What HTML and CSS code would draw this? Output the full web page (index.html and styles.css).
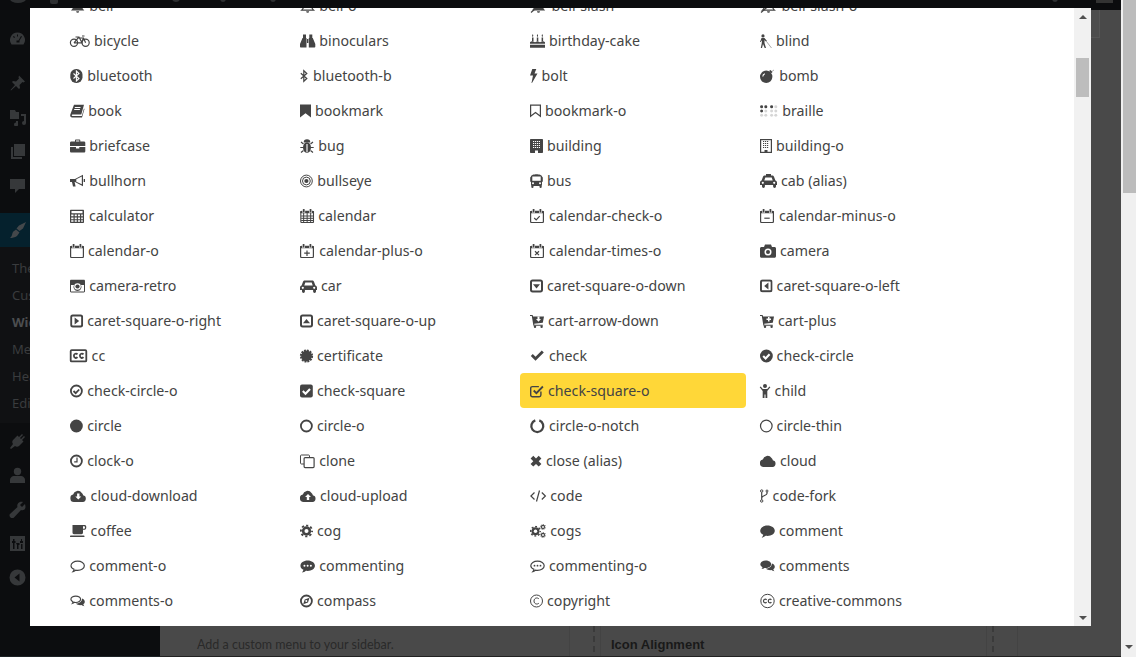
FILE: index.html
```html
<!DOCTYPE html>
<html lang="en">
<head>
<meta charset="utf-8">
<title>Icon picker</title>
<link rel="stylesheet" href="styles.css">
</head>
<body>
<svg class="defs" width="0" height="0" aria-hidden="true">
  <defs>
    <symbol id="bell" viewBox="0 0 15 14" overflow="visible"><path d="M.8 11.5c1.9-1.8 2.7-3.8 2.7-6.3a4 4 0 0 1 8 0c0 2.5.8 4.5 2.7 6.3zM6 12.3a1.500 1.500 0 0 0 3 0z"/></symbol>
    <symbol id="bello" viewBox="0 0 15 14" overflow="visible"><path class="s" d="M1.500 11.200c1.600-1.600 2.500-3.600 2.500-6a3.500 3.500 0 0 1 7 0c0 2.400.9 4.400 2.500 6z"/><path d="M6 12.300a1.500 1.500 0 0 0 3 0z"/></symbol>
    <symbol id="cal" viewBox="0 0 14 14"><rect class="s" x=".6" y="2.300" width="12.800" height="11.300" rx="1"/><rect y="2" width="14" height="2.300" rx=".8"/><rect class="w" x="2.200" y="0" width="2.800" height="3.800"/><rect class="w" x="9" y="0" width="2.800" height="3.800"/><rect x="2.700" y="0" width="1.800" height="3.500" rx=".5"/><rect x="9.500" y="0" width="1.800" height="3.500" rx=".5"/></symbol>
    <symbol id="sq" viewBox="0 0 13 14"><rect class="s4" x="1" y="1.400" width="11" height="11" rx="1.600"/></symbol>
    <symbol id="car" viewBox="0 0 17 14"><path d="M0 8.500c0-1 .8-1.700 1.600-1.900L3 2.800c.3-.8 1-1.300 1.800-1.300h7.400c.8 0 1.500.5 1.800 1.300l1.400 3.800c.8.200 1.600.9 1.600 1.900V11h-1v1.500a1.400 1.400 0 0 1-2.900 0V11H4.900v1.500a1.400 1.400 0 0 1-2.900 0V11H0z"/><path class="w" d="M4.300 6.500l1-3.100h6.400l1 3.100z"/><circle class="w" cx="2.800" cy="8.800" r="1.100"/><circle class="w" cx="14.200" cy="8.800" r="1.100"/></symbol>
    <symbol id="cart" viewBox="0 0 14 14"><path d="M0 1h2.600l.5 1.500H14l-1.200 6.300-8.600 1 .2 1h8.400v1H3.400L1.800 2H0z"/><circle cx="5" cy="12.800" r="1.200"/><circle cx="11.600" cy="12.800" r="1.200"/></symbol>
    <symbol id="cloud" viewBox="0 0 16 14"><path d="M3.800 13a3.800 3.800 0 0 1-1-7.500A4.800 4.800 0 0 1 11.500 4a3 3 0 0 1 1.300 2.300A3.400 3.400 0 0 1 12.600 13z"/></symbol>
    <symbol id="gear" viewBox="0 0 14 14"><circle cx="7" cy="7" r="5"/><circle class="g" cx="7" cy="7" r="6" stroke-dasharray="2.400 2.310" stroke-dashoffset="1.200"/><circle class="w" cx="7" cy="7" r="2.200"/></symbol>
    <symbol id="bub" viewBox="0 0 15 14"><path d="M7.500 1.500c4 0 7.300 2.300 7.300 5.200s-3.300 5.200-7.300 5.200c-.6 0-1.200 0-1.800-.1-1 .9-2.400 1.600-4 1.700.8-.8 1.400-1.600 1.600-2.700C1.200 9.900.2 8.400.2 6.700c0-2.900 3.300-5.200 7.300-5.200z"/></symbol>
    <symbol id="bubo" viewBox="0 0 15 14"><path class="s" d="M7.500 2.100c3.700 0 6.700 2 6.700 4.600s-3 4.600-6.700 4.600c-.7 0-1.300 0-1.900-.2-.7.800-1.700 1.300-2.700 1.500.6-.7 1-1.500 1-2.400C2 9.400.8 8.200.8 6.700c0-2.600 3-4.600 6.700-4.600z"/></symbol>
  </defs>
</svg>

<div class="page">
  <header class="topbar">
    <i class="tb tb-wp"></i><i class="tb tb-a"></i><i class="tb tb-b"></i><i class="tb tb-c"></i><i class="tb tb-d"></i><i class="tb tb-e"></i><i class="tb tb-f"></i>
  </header>
  <div class="shell">
    <aside class="sidebar">
      <div class="mi mi-dash"><svg width="17" height="17" viewBox="0 0 17 17"><path fill-rule="evenodd" d="M8.500 1.500a7.500 7.500 0 0 0-6 12h12a7.500 7.500 0 0 0-6-12zM8 3.500h1v2H8zM4 5.500l1-.5 1 1.500-1 .5zM13 5.500l-1-.5-2.500 4.500h-2v2h3v-2z"/></svg></div>
      <div class="mi mi-pin"><svg width="17" height="17" viewBox="0 0 17 17"><path d="M10 .5l6 6-1.500 1-1-.5-3 3 .5 3-1 1-3-3-5 4.500-.5-.5 4.500-5-3-3 1-1 3 .5 3-3-.5-1z"/></svg></div>
      <div class="mi"><svg width="18" height="17" viewBox="0 0 18 17"><path d="M1 1h5l1 2h3v7H1zM17 5v9a2 2 0 1 1-2-2V7h-3V5zM9 12v3a2 2 0 1 1-2-1.500V12z"/></svg></div>
      <div class="mi"><svg width="17" height="17" viewBox="0 0 17 17"><path d="M5 1h11v12H5zM2 4h2v10h9v2H2z"/></svg></div>
      <div class="mi"><svg width="17" height="17" viewBox="0 0 17 17"><path d="M1 2h15v10H10l-4 4v-4H1z"/></svg></div>
      <div class="mi-current"><svg width="18" height="18" viewBox="0 0 18 18"><path d="M17 1l-7 3.500-2.500 3 3 2.500 3.500-2.500zM7 8.500l3.500 3L8 15c-2 1.500-5 2-7 2 1.500-1 2-3 2.500-5C4 10 6 9.500 7 8.500z"/></svg></div>
      <nav class="submenu">
        <span>Themes</span><span>Customize</span><span class="on">Widgets</span><span>Menus</span><span>Header</span><span>Editor</span>
      </nav>
      <div class="mi mi-plug"><svg width="17" height="17" viewBox="0 0 17 17"><path d="M13 1l-3 3-1.500-1.500-1 1L4 7c-1 1-1 3 0 4l-3 4 1 1 4-3c1 1 3 1 4 0l3.500-3.500 1-1L13 7l3-3-1-1-3 3-1-1 3-3z"/></svg></div>
      <div class="mi"><svg width="17" height="17" viewBox="0 0 17 17"><circle cx="8.500" cy="4.500" r="3.700"/><path d="M1 16v-3c0-2.500 2.500-4 4-4h7c1.500 0 4 1.500 4 4v3z"/></svg></div>
      <div class="mi"><svg width="17" height="17" viewBox="0 0 17 17"><path d="M16 3l-3 3-2-2 3-3c-2-.5-4 0-5 1.500-.8 1-1 2.500-.5 3.500L1 13c-1 1-.5 2.500.5 3.500s2.500 1 3.500 0l7-7.500c1 .5 2.500.3 3.500-.5C17 7 16.500 5 16 3z"/></svg></div>
      <div class="mi"><svg width="17" height="17" viewBox="0 0 17 17"><path fill-rule="evenodd" d="M1 1h15v15H1zM4 4v2H3v2h1v6h1.500V8h1V6h-1V4zM8 10v4h1.500v-4h1V8h-3.500zM12 4v2h-1v2h3V6h-1V4zM12 9v5h1.500V9z"/></svg></div>
      <div class="mi"><svg width="17" height="17" viewBox="0 0 17 17"><path fill-rule="evenodd" d="M8.500 .5a8 8 0 1 0 0 16 8 8 0 0 0 0-16zM10.500 4.500v8l-5-4z"/></svg></div>
    </aside>
    <main class="content">
      <div class="corner"></div>
      <div class="widgets">
        <p class="w-desc">Add a custom menu to your sidebar.</p>
        <div class="w-area">
          <div class="w-edge"></div>
          <h3 class="w-title">Icon Alignment</h3>
          <div class="w-edge w-edge-r"></div>
        </div>
      </div>
    </main>
    <div class="page-scroll"><div class="page-thumb"></div><div class="page-arrow"></div></div>
  </div>
</div>

<section class="modal">
  <div class="list-wrap">
    <ul class="icons">
      <li><svg class="i" width="15.300" height="14"><use href="#bell"/></svg>bell</li>
      <li><svg class="i" width="15.300" height="14"><use href="#bello"/></svg>bell-o</li>
      <li><svg class="i" width="17.600" height="14" viewBox="0 0 17.600 14"><svg width="15" height="14" x="1"><use href="#bell"/></svg><path class="s" d="M1 13.500 16 .5"/></svg>bell-slash</li>
      <li><svg class="i" width="17.600" height="14" viewBox="0 0 17.600 14"><svg width="15" height="14" x="1"><use href="#bello"/></svg><path class="s" d="M1 13.500 16 .5"/></svg>bell-slash-o</li>

      <li><svg class="i" width="20" height="14" viewBox="0 0 20 14"><circle class="s" cx="4" cy="8.800" r="3.600"/><circle class="s" cx="15.600" cy="8.800" r="3.600"/><path class="s" d="M4 8.800 8 4h5.500l2.100 4.800M5.500 3h3.500L12 8.800H4M13.500 4l-2 4.800M12 2h2.500"/></svg>bicycle</li>
      <li><svg class="i" width="15.300" height="14" viewBox="0 0 15.300 14"><path d="M3 .5h3v3.500h.5v9.500H1c-.6 0-1-.4-1-1V10l2.500-6H3zM12.300 .5h-3v3.500h-.5v9.500h5.500c.6 0 1-.4 1-1V10l-2.500-6h-.5z"/><rect x="6.900" y="5" width="1.500" height="4"/></svg>binoculars</li>
      <li><svg class="i" width="15" height="14" viewBox="0 0 15 14"><path d="M0 8.200c1-.8 1.500-1 2.500-1s1.500 1 2.500 1 1.500-1 2.500-1 1.500 1 2.500 1 1.500-1 2.500-1 1.500.2 2.500 1v1.500H0zM0 10.800h15v3H0z"/><path d="M2 3.500h1.500v3.700H2zM6.800 3.500h1.500v3.700H6.800zM11.600 3.500h1.500v3.700h-1.500zM2.700 .2c.7.8.9 1.600 0 2.700-.9-1.100-.7-1.900 0-2.700zM7.500 .2c.7.8.9 1.600 0 2.700-.9-1.100-.7-1.900 0-2.700zM12.300 .2c.7.8.9 1.600 0 2.700-.9-1.100-.7-1.900 0-2.700z"/></svg>birthday-cake</li>
      <li><svg class="i" width="12" height="14" viewBox="0 0 12 14"><circle cx="3" cy="1.900" r="1.600"/><path d="M1.500 4h3l2.500 3-.8.700L4.500 6v3L6 14H4.700L3 10 2 14H.8l1-5V6L1 8H0z"/><path class="st pale-st" d="M6.500 7.500 11.500 14"/></svg>blind</li>

      <li><svg class="i" width="13.300" height="14" viewBox="0 0 13.300 14"><rect x=".3" y="0" width="12.200" height="14" rx="5.800"/><path class="ws" d="M3.500 4.500l5.500 5L6.400 12V2L9 4.500l-5.500 5"/></svg>bluetooth</li>
      <li><svg class="i" width="9" height="14" viewBox="0 0 9 14"><path class="s" d="M.8 4.200l6 5.300-3 2.800V1.700l3 2.800-6 5.300"/></svg>bluetooth-b</li>
      <li><svg class="i" width="7.600" height="14" viewBox="0 0 7.600 14"><path d="M2.300 0h4L4.500 4.500h3L2 14h-.5l1.500-7.500H0z"/></svg>bolt</li>
      <li><svg class="i" width="15.300" height="14" viewBox="0 0 15.300 14"><circle cx="6.200" cy="7.800" r="6.200"/><path d="M9 2l1.500-1 2 2L11 4.500z"/><path class="st pale-st" d="M12 2.500c.5-.5 1-1 2-1.500"/><path class="ws" d="M2.800 7.500C3 6 4 5 5 4.800"/></svg>bomb</li>

      <li><svg class="i" width="14.300" height="14" viewBox="0 0 14.300 14"><path d="M4 .7h10l-2.700 9.800H2.500c-1 0-1 1.500.1 1.500h9.200l2.200-7.500.5.600-2.500 8.400H2.300c-1.600 0-2.500-1.300-2-3z"/><path class="ws" d="M4.800 3.500h5.700M4.200 5.500h5.700"/></svg>book</li>
      <li><svg class="i" width="11" height="14" viewBox="0 0 11 14"><path d="M0 .5h11v13L5.500 9.300 0 13.500z"/></svg>bookmark</li>
      <li><svg class="i" width="11" height="14" viewBox="0 0 11 14"><path class="s" d="M.6 1.100h9.800v11.100L5.500 8.500.6 12.200z"/></svg>bookmark-o</li>
      <li><svg class="i" width="18.300" height="14" viewBox="0 0 18.300 14"><circle cx="1.600" cy="2.800" r="1.500"/><circle cx="5.800" cy="2.800" r="1.500"/><circle cx="1.600" cy="7" r="1.500"/><circle cx="11.600" cy="2.800" r="1.500"/><g class="pale"><circle cx="5.800" cy="7" r="1.500"/><circle cx="1.600" cy="11.200" r="1.500"/><circle cx="5.800" cy="11.200" r="1.500"/><circle cx="15.800" cy="2.800" r="1.500"/><circle cx="11.600" cy="7" r="1.500"/><circle cx="15.800" cy="7" r="1.500"/><circle cx="11.600" cy="11.200" r="1.500"/><circle cx="15.800" cy="11.200" r="1.500"/></g></svg>braille</li>

      <li><svg class="i" width="15.300" height="14" viewBox="0 0 15.300 14"><path fill-rule="evenodd" d="M5 2.500V1.400C5 .9 5.500.5 6 .5h3.300c.5 0 1 .4 1 .9v1.100h3.700c.7 0 1.300.6 1.300 1.300V7H0V3.800c0-.7.6-1.300 1.300-1.300zM6 1.500v1h3.300v-1zM0 8h6v1.500h3.300V8h6v4.200c0 .7-.6 1.300-1.300 1.300H1.300c-.7 0-1.300-.6-1.300-1.300z"/></svg>briefcase</li>
      <li><svg class="i" width="14.300" height="14" viewBox="0 0 14.300 14"><ellipse cx="7" cy="8.500" rx="4" ry="5.200"/><path d="M3.700 3.500a3.300 3.300 0 0 1 6.600 0z"/><path class="s" d="M3.500 5 1 3M10.500 5 13 3M3 8.500H.3M11 8.500h2.700M3.500 11.500 1 13.500M10.500 11.500 13 13.500"/><path class="ws" d="M7 5v8"/></svg>bug</li>
      <li><svg class="i" width="13" height="14" viewBox="0 0 13 14"><path d="M1 0h11c.6 0 1 .4 1 1v12c0 .6-.4 1-1 1H8v-2.500H5V14H1c-.6 0-1-.4-1-1V1c0-.6.4-1 1-1z"/><path class="ws dots" d="M3 2.500h7M3 4.500h7M3 6.500h7M3 8.500h7"/></svg>building</li>
      <li><svg class="i" width="12" height="14" viewBox="0 0 12 14"><rect class="s" x=".6" y=".6" width="10.800" height="12.800"/><path class="st dots" d="M3 2.500h6M3 4.500h6M3 6.500h6M3 8.500h6"/><rect x="4.500" y="11" width="3" height="2.500"/></svg>building-o</li>

      <li><svg class="i" width="15.300" height="14" viewBox="0 0 15.300 14"><path d="M0 5h5l8-4.300v11.600L5 8H4.600l1 4.500H3L2 8H0z"/><path class="w" d="M6.300 5.300 11.800 2.600v7.600L6.300 7.700z"/><rect x="13.700" y="5" width="1.300" height="3"/></svg>bullhorn</li>
      <li><svg class="i" width="13.300" height="14" viewBox="0 0 13.300 14"><circle class="st" cx="6.400" cy="7" r="5.900"/><circle class="st" cx="6.400" cy="7" r="3.900"/><circle cx="6.400" cy="7" r="2.100"/></svg>bullseye</li>
      <li><svg class="i" width="13" height="14" viewBox="0 0 13 14"><path d="M1 2.500C1 1 4 .2 6.500.2S12 1 12 2.500l.8 1v4l-.8.5V11l-.3.500V13a1 1 0 0 1-2.200 0v-1H3.500v1a1 1 0 0 1-2.200 0v-1.500L1 11V8L.2 7.500v-4z"/><path class="w" d="M2.300 2.500h8.400v4.300H2.300z"/><circle class="w" cx="3" cy="9.300" r="1"/><circle class="w" cx="10" cy="9.300" r="1"/></svg>bus</li>
      <li><svg class="i" width="17" height="14" viewBox="0 0 17 14"><use href="#car" width="17" height="14"/><path d="M6 0h5v2H6z"/></svg>cab (alias)</li>

      <li><svg class="i" width="15" height="14" viewBox="0 0 15 14"><path fill-rule="evenodd" d="M1 .7h12c.6 0 1 .4 1 1V13c0 .6-.4 1-1 1H1c-.6 0-1-.4-1-1V1.700c0-.6.4-1 1-1zM1.500 2v2.200h11V2zM1.200 5.500v1.800h2.300V5.500zM4.700 5.500v1.800h2.100V5.500zM7.900 5.500v1.800h2.100V5.500zM11.200 5.500v1.800h1.600V5.500zM1.200 8.400v1.800h2.300V8.400zM4.700 8.400v1.800h2.100V8.400zM7.900 8.400v1.800h2.100V8.400zM11.200 8.400v1.800h1.600V8.400zM1.200 11.200v1.600h2.300v-1.600zM4.700 11.200v1.600h2.100v-1.600zM7.900 11.200v1.600h2.100v-1.600zM11.200 11.200v1.600h1.600v-1.600z"/></svg>calculator</li>
      <li><svg class="i" width="14.300" height="14" viewBox="0 0 14 14"><use href="#cal" width="14" height="14"/><path class="st" d="M1 7h12M1 9.300h12M1 11.500h12M3.500 4v9M7 4v9M10.500 4v9"/></svg>calendar</li>
      <li><svg class="i" width="15" height="14" viewBox="0 0 15 14"><use href="#cal" width="14" height="14"/><path class="s" d="M4.200 9l2 2 3.500-3.800"/></svg>calendar-check-o</li>
      <li><svg class="i" width="15" height="14" viewBox="0 0 15 14"><use href="#cal" width="14" height="14"/><path class="s" d="M4.300 9.200h5.400"/></svg>calendar-minus-o</li>

      <li><svg class="i" width="14" height="14" viewBox="0 0 14 14"><use href="#cal" width="14" height="14"/></svg>calendar-o</li>
      <li><svg class="i" width="15.300" height="14" viewBox="0 0 15.300 14"><use href="#cal" width="14" height="14"/><path class="s" d="M4.200 9.200h5.600M7 6.500v5.400"/></svg>calendar-plus-o</li>
      <li><svg class="i" width="15" height="14" viewBox="0 0 15 14"><use href="#cal" width="14" height="14"/><path class="s" d="M5 7.300l4 3.800M9 7.300l-4 3.800"/></svg>calendar-times-o</li>
      <li><svg class="i" width="16" height="14" viewBox="0 0 16 14"><path d="M0 4.500C0 3.700.7 3 1.500 3H4L5 .4h6L12 3h2.500c.8 0 1.500.7 1.500 1.500v7.700c0 .8-.7 1.500-1.500 1.500h-13c-.8 0-1.500-.7-1.500-1.500z"/><circle class="w" cx="8" cy="8" r="3.500"/><circle cx="8" cy="8" r="2"/></svg>camera</li>

      <li><svg class="i" width="15.300" height="14" viewBox="0 0 15.300 14"><path fill-rule="evenodd" d="M1.200 .7h12.600c.7 0 1.200.5 1.200 1.200v10.400c0 .7-.5 1.200-1.200 1.200H1.200c-.7 0-1.200-.5-1.200-1.200V1.900C0 1.200.5.700 1.200.7zM1 6v6.500h13V6h-3a4 4 0 1 1-7 0z"/><circle class="w" cx="7.500" cy="7.500" r="3.300"/><circle cx="7.500" cy="7.500" r="2.100"/></svg>camera-retro</li>
      <li><svg class="i" width="17" height="14" viewBox="0 0 17 14"><use href="#car" width="17" height="14"/></svg>car</li>
      <li><svg class="i" width="13" height="14" viewBox="0 0 13 14"><use href="#sq" width="13" height="14"/><path d="M3 5.200h7L6.500 9.500z"/></svg>caret-square-o-down</li>
      <li><svg class="i" width="12.600" height="14" viewBox="0 0 13 14"><use href="#sq" width="13" height="14"/><path d="M8.700 3.500v7L4.300 7z"/></svg>caret-square-o-left</li>

      <li><svg class="i" width="13.300" height="14" viewBox="0 0 13 14"><use href="#sq" width="13" height="14"/><path d="M4.500 3.500v7L9 7z"/></svg>caret-square-o-right</li>
      <li><svg class="i" width="13" height="14" viewBox="0 0 13 14"><use href="#sq" width="13" height="14"/><path d="M3 9.300h7L6.500 5z"/></svg>caret-square-o-up</li>
      <li><svg class="i" width="14" height="14" viewBox="0 0 14 14"><use href="#cart" width="14" height="14"/><path class="w" d="M7.500 2.500h2v2.500h1.500L8.500 7.800 6 5h1.500z"/></svg>cart-arrow-down</li>
      <li><svg class="i" width="14" height="14" viewBox="0 0 14 14"><use href="#cart" width="14" height="14"/><path class="w" d="M8 3h1.500v1.600H11V6H9.500v1.600H8V6H6.500V4.600H8z"/></svg>cart-plus</li>

      <li><svg class="i" width="17.600" height="14" viewBox="0 0 17.600 14"><rect class="s2" x=".7" y="1.200" width="15.600" height="11.200" rx="1"/><path class="s2" d="M7.500 5.400C6.300 4 3.900 4.600 3.900 6.800s2.400 2.800 3.600 1.400M13.500 5.400c-1.200-1.400-3.600-.8-3.600 1.400s2.400 2.800 3.600 1.400"/></svg>cc</li>
      <li><svg class="i" width="13" height="14" viewBox="0 0 13 14"><circle cx="6.500" cy="7" r="5.400"/><circle class="g" cx="6.500" cy="7" r="5.600" stroke-dasharray="1.900 1"/></svg>certificate</li>
      <li><svg class="i" width="15" height="14" viewBox="0 0 15 14"><path d="M.8 7l2-2 2.700 2.700L11.800 1.500l2 2-8.300 8.300z"/></svg>check</li>
      <li><svg class="i" width="12.600" height="14" viewBox="0 0 12.600 14"><circle cx="6.400" cy="7" r="6.400"/><path class="ws2" d="M3.200 7l2.400 2.400 4-4.100"/></svg>check-circle</li>

      <li><svg class="i" width="13.300" height="14" viewBox="0 0 13.300 14"><circle class="s2" cx="6.400" cy="7" r="5.500"/><path class="s2" d="M3.500 7l2.200 2.200 3.500-3.700"/></svg>check-circle-o</li>
      <li><svg class="i" width="13" height="14" viewBox="0 0 13 14"><rect y=".6" width="12.800" height="12.800" rx="2"/><path class="ws2" d="M2.800 7l2.700 2.700 4.500-4.700"/></svg>check-square</li>
      <li class="sel"><svg class="i" width="14" height="14" viewBox="0 0 14 14"><path class="s5" d="M10.900 7.500v3.600c0 1-.8 1.700-1.700 1.700H2.400c-1 0-1.700-.7-1.700-1.700V4.300c0-1 .7-1.700 1.700-1.700h6.500"/><path class="s2" d="M3.700 6.500l2.700 2.700 6.500-6.700"/></svg>check-square-o</li>
      <li><svg class="i" width="10.600" height="14" viewBox="0 0 10.600 14"><circle cx="5" cy="2.100" r="2"/><path d="M.7 2.500 2.800 5h4.500l2.100-2.500 1 .8L7.300 7v7H5.500v-3.500H4.500V14H2.700V7L-.3 3.300z"/></svg>child</li>

      <li><svg class="i" width="13.300" height="14" viewBox="0 0 13.300 14"><circle cx="6.400" cy="7" r="6.400"/></svg>circle</li>
      <li><svg class="i" width="13" height="14" viewBox="0 0 13 14"><circle class="s2" cx="6.400" cy="7" r="5.500"/></svg>circle-o</li>
      <li><svg class="i" width="15" height="14" viewBox="0 0 15 14"><path class="s3" d="M5.300 1.400A6 6 0 1 0 9.300 1.400"/></svg>circle-o-notch</li>
      <li><svg class="i" width="12.600" height="14" viewBox="0 0 12.600 14"><circle class="s" cx="6.300" cy="7" r="5.800"/></svg>circle-thin</li>

      <li><svg class="i" width="13.300" height="14" viewBox="0 0 13.300 14"><circle class="s2" cx="6.400" cy="7" r="5.500"/><path class="s" d="M7 3.500v4.300H4.200"/></svg>clock-o</li>
      <li><svg class="i" width="15.300" height="14" viewBox="0 0 15.300 14"><path class="st" d="M9.500 3.500V1.800c0-.5-.4-.8-.8-.8H1.300c-.4 0-.8.300-.8.800v7.400c0 .4.400.8.800.8H4"/><rect class="s" x="4.100" y="3.600" width="10" height="10" rx="1"/></svg>clone</li>
      <li><svg class="i" width="12" height="14" viewBox="0 0 12 14"><path d="M3.300 1.800 6 4.500l2.700-2.700 2.700 2.700L8.700 7.200l2.700 2.700-2.700 2.700L6 9.900l-2.700 2.700L.6 9.900l2.700-2.700L.6 4.500z"/></svg>close (alias)</li>
      <li><svg class="i" width="16" height="14" viewBox="0 0 16 14"><use href="#cloud" width="16" height="14"/></svg>cloud</li>

      <li><svg class="i" width="16.600" height="14" viewBox="0 0 16 14"><use href="#cloud" width="16" height="14"/><path class="w" d="M6.800 4.500h2.400v3H11l-3 3-3-3h1.800z"/></svg>cloud-download</li>
      <li><svg class="i" width="16" height="14" viewBox="0 0 16 14"><use href="#cloud" width="16" height="14"/><path class="w" d="M6.800 11h2.400V8H11L8 5 5 8h1.800z"/></svg>cloud-upload</li>
      <li><svg class="i" width="16.300" height="14" viewBox="0 0 16.300 14"><path class="s" d="M4.500 3.500.9 7l3.600 3.500M11.800 3.500 15.400 7l-3.600 3.500M9.500 1.500l-3 11"/></svg>code</li>
      <li><svg class="i" width="8.600" height="14" viewBox="0 0 8.600 14"><circle class="st" cx="1.700" cy="2" r="1.200"/><circle class="st" cx="1.700" cy="12" r="1.200"/><circle class="st" cx="7" cy="2" r="1"/><path class="s" d="M1.700 3.200v7.600M7 3v1.500c0 2-5.300 2-5.300 4.500"/></svg>code-fork</li>

      <li><svg class="i" width="16.600" height="14" viewBox="0 0 16.600 14"><path fill-rule="evenodd" d="M2.500 1h12.200c1 0 1.600.9 1.600 2.200S15.700 5.800 14.700 5.800H13v2.700c0 1-.6 1.700-1.500 1.700H4c-.9 0-1.500-.7-1.500-1.700zM13 2.200v2.500h1c.6 0 1-.6 1-1.300s-.4-1.200-1-1.200z"/><rect y="11.600" width="14.500" height="1.500" rx=".7"/></svg>coffee</li>
      <li><svg class="i" width="13" height="14" viewBox="0 0 14 14"><use href="#gear" width="14" height="14"/></svg>cog</li>
      <li><svg class="i" width="16.300" height="14" viewBox="0 0 16.300 14"><use href="#gear" width="11" height="11" y="1.800"/><use href="#gear" width="6" height="6" x="10" y="0"/><use href="#gear" width="6" height="6" x="10" y="8"/></svg>cogs</li>
      <li><svg class="i" width="15" height="14" viewBox="0 0 15 14"><use href="#bub" width="15" height="14"/></svg>comment</li>

      <li><svg class="i" width="15.300" height="14" viewBox="0 0 15 14"><use href="#bubo" width="15" height="14"/></svg>comment-o</li>
      <li><svg class="i" width="15.300" height="14" viewBox="0 0 15 14"><use href="#bub" width="15" height="14"/><circle class="w" cx="4.300" cy="6.700" r="1"/><circle class="w" cx="7.500" cy="6.700" r="1"/><circle class="w" cx="10.700" cy="6.700" r="1"/></svg>commenting</li>
      <li><svg class="i" width="15" height="14" viewBox="0 0 15 14"><use href="#bubo" width="15" height="14"/><circle cx="4.500" cy="6.700" r=".9"/><circle cx="7.500" cy="6.700" r=".9"/><circle cx="10.500" cy="6.700" r=".9"/></svg>commenting-o</li>
      <li><svg class="i" width="15" height="14" viewBox="0 0 15 14"><path d="M5.800 1.500c3 0 5.400 1.700 5.400 3.800S8.800 9 5.800 9c-.5 0-1 0-1.400-.1-.8.700-1.800 1.100-3 1.200.6-.6 1-1.200 1.100-1.900C1.200 7.500.3 6.500.3 5.300c0-2.100 2.500-3.800 5.500-3.800z"/><path d="M12 4.500c1.700.6 2.800 1.800 2.800 3.300 0 1-.6 1.900-1.500 2.500.1.800.5 1.400 1.100 2-1.200-.1-2.200-.5-3-1.200-1.900.3-4.500-.3-5.500-1.600 3 0 6-1.900 6-5z"/></svg>comments</li>

      <li><svg class="i" width="15.300" height="14" viewBox="0 0 15.300 14"><path class="s" d="M5.800 2.100c2.800 0 4.800 1.500 4.800 3.200S8.600 8.500 5.800 8.500c-.6 0-1.100 0-1.600-.2-.5.500-1.100.8-1.700 1 .3-.5.500-1 .5-1.500C1.700 7.200.9 6.300.9 5.300c0-1.700 2.100-3.200 4.900-3.200z"/><path d="M12 4.500c1.700.6 2.800 1.800 2.800 3.300 0 1-.6 1.900-1.500 2.500.1.800.5 1.400 1.100 2-1.200-.1-2.200-.5-3-1.200-1.900.3-4.500-.3-5.500-1.600 3 0 6.200-1.800 6.100-5z"/></svg>comments-o</li>
      <li><svg class="i" width="13" height="14" viewBox="0 0 13 14"><circle class="s2" cx="6.400" cy="7" r="5.500"/><path fill-rule="evenodd" d="M9.500 3.800 8 8.500 3.200 10.200 4.700 5.400zM6.300 6a1 1 0 1 0 0 2 1 1 0 0 0 0-2z"/></svg>compass</li>
      <li><svg class="i" width="13" height="14" viewBox="0 0 13 14"><circle class="st" cx="6.500" cy="7" r="6"/><path class="st" d="M9 5C7.600 3.200 4 3.700 4 7s3.600 3.800 5 2"/></svg>copyright</li>
      <li><svg class="i" width="15" height="14" viewBox="0 0 15 14"><circle class="st" cx="7.500" cy="7" r="6.700"/><path class="s" d="M6.600 5.800C5.600 4.600 3.500 5.100 3.500 7s2.100 2.400 3.100 1.200M11.400 5.800c-1-1.200-3.100-.7-3.100 1.200s2.100 2.400 3.100 1.200"/></svg>creative-commons</li>
    </ul>
  </div>
  <div class="scrollbar"><div class="arrow up"></div><div class="track"><div class="thumb"></div></div><div class="arrow down"></div></div>
</section>
</body>
</html>
```

FILE: styles.css
```css
* { box-sizing: border-box; }
html, body { margin: 0; height: 100%; overflow: hidden; background: #494949; }
body { font-family: "Noto Sans", "Open Sans", sans-serif; }
.defs { position: absolute; }

.page { width: 1136px; height: 657px; display: flex; flex-direction: column; overflow: hidden; }
.topbar { height: 10px; background: #0b0c0e; flex: none; position: relative; }
.tb { position: absolute; top: -5px; width: 14px; height: 8px; background: #2e3032; border-radius: 50%; }
.tb-wp { left: 10px; width: 16px; }
.tb-a { left: 50px; top: -4px; width: 8px; border-radius: 2px; }
.tb-b { left: 172px; top: -6px; width: 8px; }
.tb-c { left: 220px; top: -6px; width: 6px; }
.tb-d { left: 270px; top: -6px; width: 6px; }
.tb-e { left: 1052px; top: -6px; width: 6px; }
.tb-f { left: 1096px; top: -4px; width: 17px; height: 7px; border-radius: 0; background: #333; }

.shell { flex: 1; display: flex; min-height: 0; }
.sidebar { width: 160px; flex: none; background: #0c0d0f; padding-top: 12px; display: flex; flex-direction: column; border-bottom: 1px solid #1d2225; }
.sidebar svg { fill: #36383a; display: block; }
.mi { height: 34px; padding-left: 9px; display: flex; align-items: center; flex: none; }
.mi-dash { margin-bottom: 10px; }
.mi-plug { margin-top: 1px; }
.mi-current { height: 34px; margin-top: 11px; background: #05212d; padding-left: 9px; display: flex; align-items: center; flex: none; }
.mi-current svg { fill: #44484b; }
.submenu { background: #101113; display: flex; flex-direction: column; padding: 8px 0 6px 12px; font-size: 13px; color: #3a3c3e; height: 176px; }
.submenu span { height: 27px; line-height: 27px; }
.submenu .on { color: #4c4e50; font-weight: 700; }

.content { flex: 1; min-width: 0; position: relative; display: flex; flex-direction: column; justify-content: flex-end; border-bottom: 1px solid #222; }
.corner { position: absolute; top: 0; left: 931px; width: 9px; height: 28px; background: #4c4c4c; border: 1px solid #555; border-width: 0 1px 1px 0; }
.widgets { height: 30px; display: flex; }
.w-desc { margin: 0; width: 409px; padding: 10px 0 0 37px; font: 12.500px/18px "Lato", sans-serif; color: #2a2a2a; white-space: nowrap; }
.w-area { flex: 1; display: flex; align-items: flex-start; }
.w-edge { width: 32px; height: 30px; border-left: 1px solid #434343; border-right: 1px solid #434343; margin-right: 10px; background: linear-gradient(#3a3a3a 0 6px, transparent 6px 10px) 23px 0 / 2px 10px repeat-y; }
.w-title { margin: 10px 0 0; width: 375px; font: 700 13px/18px "Liberation Sans", sans-serif; color: #191919; white-space: nowrap; }
.w-edge-r { margin: 0; background-position: 5px 0; }

.page-scroll { width: 15px; flex: none; background: #f0f0f0; position: relative; margin-top: -10px; }
.page-thumb { margin-left: 2px; height: 193px; background: #bcbcbc; }
.page-arrow { position: absolute; left: 4px; top: 645px; border: 4px solid transparent; border-top: 4px solid #505050; border-bottom: 0; }

.modal { position: absolute; left: 30px; top: 8px; width: 1061px; height: 618px; background: #fff; display: flex; overflow: hidden; }
.list-wrap { flex: 1; min-width: 0; overflow: hidden; }
.icons { list-style: none; margin: -20px 0 0; padding: 0 0 0 30px; display: grid; grid-template-columns: repeat(4, 226px); column-gap: 4px; grid-auto-rows: 35px; }
.icons li { display: flex; align-items: center; gap: 4px; padding: 0 10px; font-size: 14.200px; color: #444; white-space: nowrap; border-radius: 4px; }
.icons .sel { background: #ffd738; }

.i { flex: none; fill: #444; overflow: visible; }
.s { fill: none; stroke: #444; stroke-width: 1.2; }
.s2 { fill: none; stroke: #444; stroke-width: 1.8; }
.s3 { fill: none; stroke: #444; stroke-width: 2.3; }
.s4 { fill: none; stroke: #444; stroke-width: 2; }
.s5 { fill: none; stroke: #444; stroke-width: 1.4; }
.st { fill: none; stroke: #444; stroke-width: 1; }
.pale-st { stroke: #aaa; }
.w { fill: #fff; }
.ws { fill: none; stroke: #fff; stroke-width: 1.1; }
.ws2 { fill: none; stroke: #fff; stroke-width: 2.1; }
.g { fill: none; stroke: #444; stroke-width: 2; }
.pale { fill: #d6d6d6; }
.dots { stroke-dasharray: 1.200 .8; }

.scrollbar { width: 17px; flex: none; background: #f1f1f1; display: flex; flex-direction: column; align-items: center; }
.arrow { flex: none; height: 17px; display: flex; }
.arrow::before { content: ""; margin: auto; border: 4px solid transparent; }
.up::before { border-bottom-color: #505050; border-top: 0; }
.down::before { border-top-color: #505050; border-bottom: 0; }
.track { flex: 1; width: 100%; padding: 33px 2px 0; }
.thumb { height: 39px; background: #bdbdbd; }
```
